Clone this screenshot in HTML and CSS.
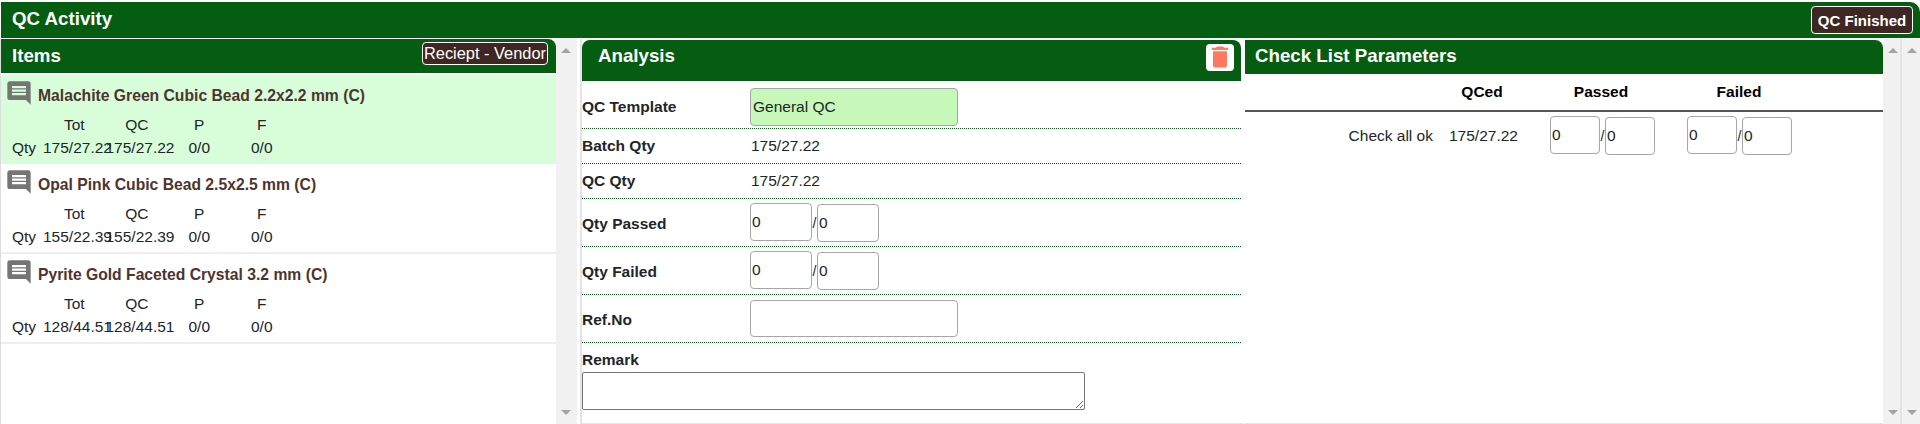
FILE: index.html
```html
<!DOCTYPE html>
<html lang="en">
<head>
  <meta charset="UTF-8" />
  <title>QC Activity</title>
  <link rel="stylesheet" href="styles.css">
</head>
<body>
  <div class="topbar">
    <span class="topbar-title">QC Activity</span>
    <button class="btn-dark btn-finish">QC Finished</button>
  </div>
  <div class="main">
    <div class="items">
      <div class="panel-head items-head">
        <span>Items</span>
        <button class="btn-dark btn-type">Reciept - Vendor</button>
      </div>
      <div class="item selected">
        <div class="item-title">
          <svg class="comment" viewBox="0 0 24 24"><path d="M21.99 4c0-1.1-.89-2-1.99-2H4c-1.1 0-2 .9-2 2v12c0 1.1.9 2 2 2h14l4 4-.01-18zM18 14H6v-2h12v2zm0-3H6V9h12v2zm0-3H6V6h12v2z"/></svg>
          <span>Malachite Green Cubic Bead 2.2x2.2 mm (C)</span>
        </div>
        <div class="qty-grid">
          <span></span><span>Tot</span><span>QC</span><span>P</span><span>F</span>
          <span class="qty-label">Qty</span><span>175/27.22</span><span>175/27.22</span><span>0/0</span><span>0/0</span>
        </div>
      </div>
      <div class="item">
        <div class="item-title">
          <svg class="comment" viewBox="0 0 24 24"><path d="M21.99 4c0-1.1-.89-2-1.99-2H4c-1.1 0-2 .9-2 2v12c0 1.1.9 2 2 2h14l4 4-.01-18zM18 14H6v-2h12v2zm0-3H6V9h12v2zm0-3H6V6h12v2z"/></svg>
          <span>Opal Pink Cubic Bead 2.5x2.5 mm (C)</span>
        </div>
        <div class="qty-grid">
          <span></span><span>Tot</span><span>QC</span><span>P</span><span>F</span>
          <span class="qty-label">Qty</span><span>155/22.39</span><span>155/22.39</span><span>0/0</span><span>0/0</span>
        </div>
      </div>
      <div class="item">
        <div class="item-title">
          <svg class="comment" viewBox="0 0 24 24"><path d="M21.99 4c0-1.1-.89-2-1.99-2H4c-1.1 0-2 .9-2 2v12c0 1.1.9 2 2 2h14l4 4-.01-18zM18 14H6v-2h12v2zm0-3H6V9h12v2zm0-3H6V6h12v2z"/></svg>
          <span>Pyrite Gold Faceted Crystal 3.2 mm (C)</span>
        </div>
        <div class="qty-grid">
          <span></span><span>Tot</span><span>QC</span><span>P</span><span>F</span>
          <span class="qty-label">Qty</span><span>128/44.51</span><span>128/44.51</span><span>0/0</span><span>0/0</span>
        </div>
      </div>
    </div>
    <div class="scrollbar scrollbar-items"><i class="arrow-up"></i><i class="arrow-down"></i></div>

    <div class="analysis">
      <div class="panel-head analysis-head">
        <span class="analysis-title">Analysis</span>
        <button class="btn-delete">
          <svg viewBox="0 0 24 24"><path d="M6 19c0 1.1.9 2 2 2h8c1.1 0 2-.9 2-2V7H6v12zM19 4h-3.5l-1-1h-5l-1 1H5v2h14V4z"/></svg>
        </button>
      </div>
      <div class="form-row row-template">
        <label>QC Template</label>
        <div class="select-box">General QC</div>
      </div>
      <div class="form-row row-text">
        <label>Batch Qty</label>
        <span class="value">175/27.22</span>
      </div>
      <div class="form-row row-text">
        <label>QC Qty</label>
        <span class="value">175/27.22</span>
      </div>
      <div class="form-row row-input">
        <label>Qty Passed</label>
        <div class="pair">
          <input class="num" type="text" value="0"><span class="slash">/</span><input class="num num-low" type="text" value="0">
        </div>
      </div>
      <div class="form-row row-input">
        <label>Qty Failed</label>
        <div class="pair">
          <input class="num" type="text" value="0"><span class="slash">/</span><input class="num num-low" type="text" value="0">
        </div>
      </div>
      <div class="form-row row-input">
        <label>Ref.No</label>
        <input class="ref" type="text">
      </div>
      <div class="remark">
        <label>Remark</label>
        <textarea rows="2"></textarea>
      </div>
    </div>

    <div class="checklist">
      <div class="panel-head check-head"><span>Check List Parameters</span></div>
      <div class="check-titles">
        <span></span><span>QCed</span><span>Passed</span><span>Failed</span>
      </div>
      <div class="check-row">
        <span class="check-name">Check all ok</span>
        <span class="qced-val">175/27.22</span>
        <div class="pair">
          <input class="num small" type="text" value="0"><span class="slash">/</span><input class="num small num-low" type="text" value="0">
        </div>
        <div class="pair">
          <input class="num small" type="text" value="0"><span class="slash">/</span><input class="num small num-low" type="text" value="0">
        </div>
      </div>
    </div>
    <div class="scrollbar scrollbar-inner"><i class="arrow-up"></i><i class="arrow-down"></i></div>
    <div class="scrollbar scrollbar-page"><i class="arrow-up"></i><i class="arrow-down"></i></div>
  </div>
</body>
</html>
```

FILE: styles.css
```css
* {
  box-sizing: border-box;
}
html, body {
  height: 100%;
}
body {
  margin: 0;
  padding-top: 2px;
  overflow: hidden;
  font-family: "Liberation Sans", Arial, sans-serif;
  font-size: 15.5px;
  color: #212529;
  background: #fff;
}
button {
  font-family: inherit;
  cursor: pointer;
}
.topbar {
  display: flex;
  justify-content: space-between;
  align-items: center;
  height: 36px;
  margin-left: 1px;
  padding: 0 7px 0 11px;
  background: #045d10;
  color: #fff;
  border-top-right-radius: 10px;
}
.topbar-title {
  margin-bottom: 2px;
  font-size: 18.72px;
  font-weight: bold;
}
.btn-dark {
  background: #3e2723;
  color: #fff;
  border: 1px solid #fff;
  border-radius: 4px;
  padding: 0;
  white-space: nowrap;
}
.btn-finish {
  width: 102px;
  height: 28px;
  font-size: 15px;
  font-weight: bold;
}
.main {
  display: flex;
  height: 385px;
  margin-top: 1px;
}
.panel-head {
  display: flex;
  justify-content: space-between;
  align-items: center;
  background: #045d10;
  color: #fff;
  font-size: 18.72px;
  font-weight: bold;
}

/* items */
.items {
  width: 556px;
  border-left: 1px solid #ddd;
}
.items-head {
  height: 34px;
  padding: 0 8px 0 11px;
  border-radius: 0 8px 0 0;
  margin-bottom: 2px;
}
.btn-type {
  width: 126px;
  height: 23px;
  margin-top: -5px;
  font-size: 16.4px;
  font-weight: normal;
}
.item {
  height: 90px;
  border-bottom: 2px solid #eee;
}
.item.selected {
  height: 89px;
  background: #d7fed9;
  border-bottom: 0;
}
.item-title {
  display: flex;
  align-items: center;
  height: 36px;
  padding-left: 4px;
  color: #4e342e;
  font-size: 15.7px;
  font-weight: bold;
}
.item-title span {
  padding-top: 5px;
}
.comment {
  width: 28px;
  height: 28px;
  margin-right: 5px;
  fill: #757575;
}
.qty-grid {
  display: grid;
  grid-template-columns: 42px repeat(4, 62.5px);
  grid-auto-rows: 23px;
  padding-top: 2px;
  text-align: center;
  white-space: nowrap;
  line-height: 23px;
}
.qty-label {
  text-align: left;
  padding-left: 11px;
}

/* scrollbars */
.scrollbar {
  position: relative;
  flex: none;
  background: #f1f1f1;
}
.arrow-up,
.arrow-down {
  position: absolute;
  left: 5px;
  border-left: 5px solid transparent;
  border-right: 5px solid transparent;
}
.arrow-up {
  top: 9px;
  border-bottom: 5px solid #a3a3a3;
}
.arrow-down {
  bottom: 9px;
  border-top: 5px solid #a3a3a3;
}
.scrollbar-items {
  width: 21px;
}
.scrollbar-inner {
  width: 19px;
  border-right: 2px solid #e4e4e4;
}
.scrollbar-page {
  width: 18px;
}

/* analysis */
.analysis {
  width: 664px;
  margin-left: 3px;
  padding-top: 1px;
  border-left: 2px solid #e4e4e4;
  border-bottom: 1px solid #e4e4e4;
}
.analysis-head {
  align-items: flex-start;
  width: 659px;
  height: 41px;
  padding: 4px 7px 0 16px;
  border-radius: 8px 8px 0 0;
}
.analysis-title {
  margin-top: 1px;
}
.btn-delete {
  width: 28px;
  height: 27px;
  padding: 0;
  background: #fff;
  border: 0;
  border-radius: 4px;
}
.btn-delete svg {
  display: block;
  width: 28px;
  height: 28px;
  margin-top: -1px;
  fill: #ff7961;
}
.form-row {
  display: flex;
  align-items: center;
  width: 659px;
  border-bottom: 1px dotted #045d10;
}
.form-row label,
.remark label {
  font-weight: bold;
  color: #212529;
}
.form-row label {
  width: 168px;
  flex: none;
}
.row-template {
  height: 48px;
  padding-top: 5px;
}
.row-text {
  height: 35px;
}
.row-input {
  height: 48px;
}
.row-input label {
  padding-top: 2px;
}
.select-box {
  width: 208px;
  height: 38px;
  padding-left: 2px;
  line-height: 36px;
  background: #c6f8b9;
  border: 1px solid #a6a6a6;
  border-radius: 4px;
}
.value {
  padding-left: 1px;
}
.pair {
  display: flex;
  align-items: flex-start;
}
input {
  font-family: inherit;
  font-size: 15.5px;
  color: #212529;
  border: 1px solid #a6a6a6;
  border-radius: 4px;
  outline: 0;
}
.num {
  width: 62px;
  height: 38px;
  padding: 0 1px;
}
.num-low {
  margin-top: 1px;
}
.num.small {
  width: 50px;
}
.slash {
  width: 5px;
  margin-top: 11px;
  font-size: 14px;
  line-height: 18px;
  text-align: center;
}
.ref {
  width: 208px;
  height: 37px;
}
.remark {
  padding-top: 7px;
}
.remark label {
  display: block;
  line-height: 20px;
}
.remark textarea {
  display: block;
  width: 503px;
  height: 38px;
  margin-top: 2px;
  border: 1px solid #767676;
  border-radius: 2px;
  outline: 0;
}

/* check list */
.checklist {
  width: 638px;
  margin-left: 1px;
  padding-top: 1px;
  border-bottom: 1px solid #e4e4e4;
}
.check-head {
  height: 34px;
  padding: 0 0 2px 10px;
  border-radius: 0 8px 0 0;
}
.check-titles {
  display: grid;
  grid-template-columns: 178px 118px 120px 156px;
  align-items: center;
  height: 38px;
  font-weight: bold;
  color: #000;
  border-bottom: 2px solid #555;
}
.check-titles span {
  text-align: center;
}
.check-row {
  display: grid;
  grid-template-columns: 188px 117px 137px 105px;
  align-items: center;
  padding-top: 4px;
}
.check-name {
  text-align: right;
}
.qced-val {
  padding-left: 16px;
}
```
